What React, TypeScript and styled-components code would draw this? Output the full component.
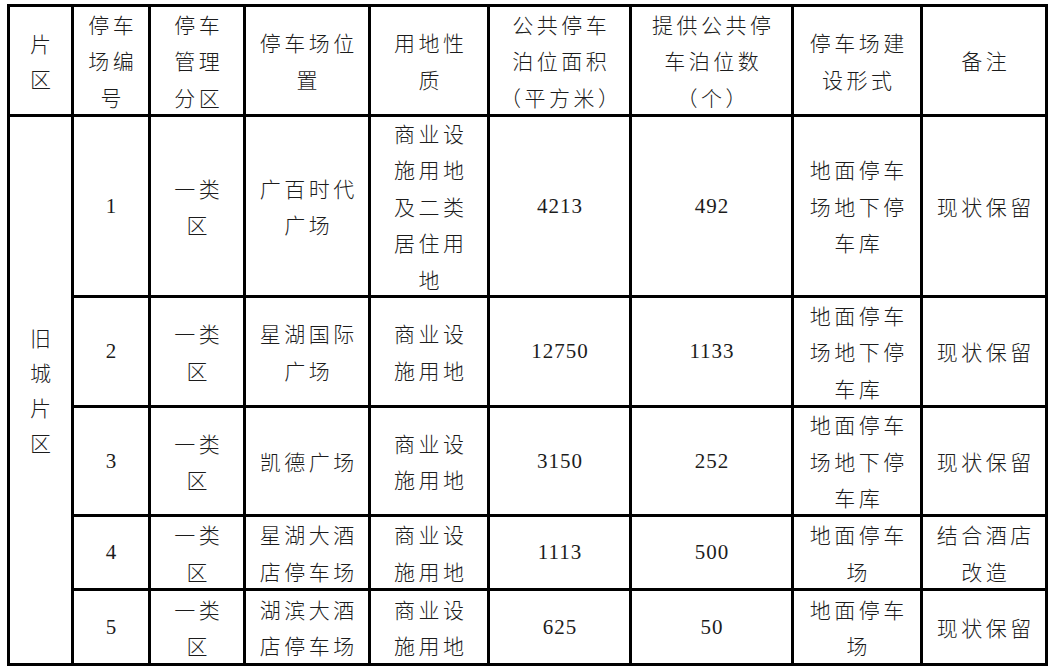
import React from "react";
import styled, { createGlobalStyle } from "styled-components";

const Global = createGlobalStyle`
  html, body { margin: 0; padding: 0; background: #ffffff; }
  body { width: 1060px; height: 666px; overflow: hidden; }
`;

const Page = styled.div`
  padding: 4px 0 0 7px;
`;

const Table = styled.div`
  display: grid;
  grid-template-columns: 61px 74px 92px 122px 116px 139px 159px 126px 122px;
  grid-template-rows: 107px 178px 107px 106px 71px 72px;
  gap: 3px;
  padding: 3px;
  background: #000;
  width: max-content;
`;

const Cell = styled.div<{ $rows?: number }>`
  background: #fff;
  display: flex;
  flex-direction: column;
  align-items: center;
  justify-content: center;
  overflow: visible;
  grid-row: ${(p) => (p.$rows ? `span ${p.$rows}` : "auto")};
`;

const Line = styled.span<{ $num?: boolean; $lh?: number }>`
  display: block;
  white-space: nowrap;
  font-family: ${(p) =>
    p.$num
      ? `"Liberation Serif", "Times New Roman", serif`
      : `"Noto Sans CJK SC", "Noto Sans", sans-serif`};
  font-size: ${(p) => (p.$num ? "21px" : "21px")};
  font-weight: ${(p) => (p.$num ? 400 : 300)};
  letter-spacing: ${(p) => (p.$num ? "1px" : "3.5px")};
  padding-left: ${(p) => (p.$num ? "1px" : "3.5px")};
  line-height: ${(p) => p.$lh ?? 36.5}px;
  color: #1c1c1c;
`;

type CellData = { lines: string[]; num?: boolean; rows?: number; lh?: number };

const header: CellData[] = [
  { lines: ["片", "区"], lh: 35 },
  { lines: ["停车", "场编", "号"] },
  { lines: ["停车", "管理", "分区"] },
  { lines: ["停车场位", "置"] },
  { lines: ["用地性", "质"] },
  { lines: ["公共停车", "泊位面积", "（平方米）"] },
  { lines: ["提供公共停", "车泊位数", "（个）"] },
  { lines: ["停车场建", "设形式"] },
  { lines: ["备注"] },
];

const rows: CellData[][] = [
  [
    { lines: ["1"], num: true },
    { lines: ["一类", "区"] },
    { lines: ["广百时代", "广场"] },
    { lines: ["商业设", "施用地", "及二类", "居住用", "地"] },
    { lines: ["4213"], num: true },
    { lines: ["492"], num: true },
    { lines: ["地面停车", "场地下停", "车库"] },
    { lines: ["现状保留"] },
  ],
  [
    { lines: ["2"], num: true },
    { lines: ["一类", "区"] },
    { lines: ["星湖国际", "广场"] },
    { lines: ["商业设", "施用地"] },
    { lines: ["12750"], num: true },
    { lines: ["1133"], num: true },
    { lines: ["地面停车", "场地下停", "车库"] },
    { lines: ["现状保留"] },
  ],
  [
    { lines: ["3"], num: true },
    { lines: ["一类", "区"] },
    { lines: ["凯德广场"] },
    { lines: ["商业设", "施用地"] },
    { lines: ["3150"], num: true },
    { lines: ["252"], num: true },
    { lines: ["地面停车", "场地下停", "车库"] },
    { lines: ["现状保留"] },
  ],
  [
    { lines: ["4"], num: true },
    { lines: ["一类", "区"] },
    { lines: ["星湖大酒", "店停车场"] },
    { lines: ["商业设", "施用地"] },
    { lines: ["1113"], num: true },
    { lines: ["500"], num: true },
    { lines: ["地面停车", "场"] },
    { lines: ["结合酒店", "改造"] },
  ],
  [
    { lines: ["5"], num: true },
    { lines: ["一类", "区"] },
    { lines: ["湖滨大酒", "店停车场"] },
    { lines: ["商业设", "施用地"] },
    { lines: ["625"], num: true },
    { lines: ["50"], num: true },
    { lines: ["地面停车", "场"] },
    { lines: ["现状保留"] },
  ],
];

const renderCell = (c: CellData, key: string) => (
  <Cell key={key} $rows={c.rows}>
    {c.lines.map((l, i) => (
      <Line key={i} $num={c.num} $lh={c.lh}>
        {l}
      </Line>
    ))}
  </Cell>
);

export default function App() {
  return (
    <>
      <Global />
      <Page>
        <Table>
          {header.map((c, i) => renderCell(c, `h${i}`))}
          {renderCell({ lines: ["旧", "城", "片", "区"], rows: 5, lh: 35 }, "district")}
          {rows.map((r, ri) => r.map((c, ci) => renderCell(c, `r${ri}c${ci}`)))}
        </Table>
      </Page>
    </>
  );
}
